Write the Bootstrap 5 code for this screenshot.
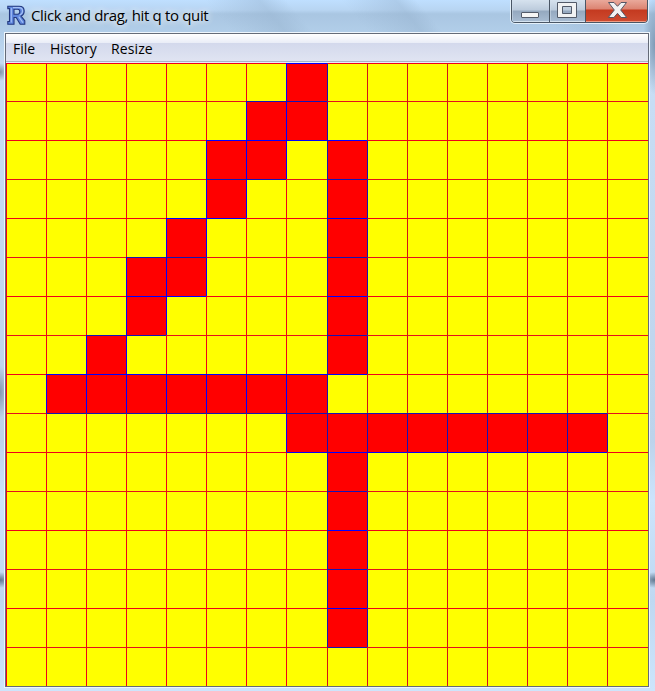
<!DOCTYPE html>
<html lang="en">
<head>
<meta charset="utf-8">
<meta name="viewport" content="width=device-width, initial-scale=1">
<title>Click and drag, hit q to quit</title>
<link href="https://cdn.jsdelivr.net/npm/bootstrap@5.3.0/dist/css/bootstrap.min.css" rel="stylesheet">
<style>
body{font-family:"Open Sans","Noto Sans",sans-serif;font-size:14px;color:#000;overflow:hidden}
.window-frame{width:655px;height:691px;padding:0 6px 4px 4px;
  background:
   radial-gradient(ellipse 9px 9px at 0 72px,#7f94aa 0,transparent 100%),
   radial-gradient(ellipse 9px 26px at 0 392px,#8499af 0,transparent 100%),
   radial-gradient(ellipse 14px 8px at 0 580px,#5f778e 0,transparent 100%),
   radial-gradient(ellipse 14px 8px at 655px 580px,#5f778e 0,transparent 100%),
   radial-gradient(ellipse 12px 50px at 655px 45px,#7f9ab5 0,transparent 100%),
   linear-gradient(50deg,transparent 0 34%,#91adc960 42%,transparent 46% 54%,#91adc960 62%,transparent 65% 82%,#91adc940 88%,transparent 92%) 0 0/655px 33px no-repeat,
   linear-gradient(180deg,#bfdfff 0,#b8d5f2 10px,#a9c6e2 14px,#b2cee9 33px,#c8def5 70px,#bdd3eb 440px,#cce4fc 500px,#bfd8f1 600px,#cde5fc 691px)}
.caption{height:32px}
.caption-text{font-size:15px;line-height:20px;margin-left:5px;margin-top:5px;padding-right:6px;letter-spacing:-.34px;white-space:nowrap;
  text-shadow:0 0 6px #ffffffb0,0 0 9px #ffffffb0,0 0 12px #ffffff90}
.app-icon{margin:5px 0 0 3px}
.controls{width:139px;height:24px;margin-right:0;border:1px solid #e4f0fa;border-top:0;border-radius:0 0 5px 5px;overflow:hidden}
.controls-inner{border:1px solid #4a5665;border-top:0;border-radius:0 0 4px 4px;overflow:hidden;height:23px}
.ctl{border:0;padding:0;background:linear-gradient(#d6e2ee 0,#bccbdc 10px,#94a8bf 11px,#a9bdd3 100%);box-shadow:inset 0 -1px #d5e3f0,inset 1px 0 #d0deeb88}
.ctl-min{width:37px}
.ctl-max{width:36px}
.ctl+.ctl{border-left:1px solid #4a5665}
.ctl-close{background:linear-gradient(#e9a99b 0,#dc8472 9px,#c43a20 10px,#cf4b30 100%);box-shadow:inset 0 -1px #ee9c84}
.client{width:646px;height:656px;border:1px solid #eef6fd}
.client-inner{border:1px solid #646b78;height:654px}
.menu{height:29px;padding:0 7px;gap:14px;background:linear-gradient(#fff 0,#e9edf7 9px,#d3d9ec 9px,#e0e4f2 27px,#a9b5c6 27px,#a9b5c6 28px,#e9eef7 28px)}
.menu .nav-link{padding:0;color:#000;line-height:29px;white-space:nowrap}
.m-file{width:23px}.m-history{width:47px}.m-resize{width:42px;letter-spacing:.12px}
.board{display:grid;width:642px;height:623px;grid-template-columns:repeat(7,40px) 41px repeat(7,40px) 41px;grid-template-rows:38px repeat(15,39px);background:#ff0;cursor:crosshair}
.cell{--h:#f00018;--v:#f00018;background:#ff0;border-left:1px solid var(--v);border-top:1px solid var(--h)}
.cell.dim-v{--v:#d01418}
.cell.dim-h{--h:#e4101c}
.cell.on{background:red}
.cell.edge-v{--v:#0000ff}
.cell.edge-h{--h:#0000ff}
.cell.edge-v.dim-v{--v:#1414b4}
.cell.edge-h.dim-h{--h:#1414b4}
</style>
<script src="https://cdn.jsdelivr.net/npm/bootstrap@5.3.0/dist/js/bootstrap.bundle.min.js"></script>
</head>
<body>
<main class="window-frame">
  <header class="caption d-flex align-items-start">
    <svg class="app-icon" width="19" height="20" viewBox="0 0 19 20" aria-hidden="true">
      <path d="M.8 1.2H12q5.200 0 5.200 4.800 0 3.900-3.200 5l3.800 4.800v3.400h-4.600l-4-6.700H7v6.700H.8v-2.700h1.700V3.600H.8zM7 4.200v5h3.600q2.200 0 2.200-2.500T10.600 4.200z" fill="#5f86dc" fill-rule="evenodd" stroke="#22387f" stroke-width="1.1"/>
      <path d="M4.300 3v14.500M6 2.600h6q3.600.1 3.600 3.500 0 3-3 4.100M11.700 11.600l4.200 6" fill="none" stroke="#a4c0f6" stroke-width="1.1"/>
    </svg>
    <div class="caption-text">Click and drag, hit q to quit</div>
    <div class="controls ms-auto">
      <div class="controls-inner d-flex">
        <button class="ctl ctl-min d-flex" aria-label="Minimize"><svg width="37" height="22"><rect x="9.500" y="12.500" width="17" height="5" rx=".5" fill="#f5f5f5" stroke="#525a69"/></svg></button>
        <button class="ctl ctl-max d-flex" aria-label="Maximize"><svg width="35" height="22"><path d="M7.500 2.500h19v15h-19zM12.500 6.500v7h9v-7z" fill="#f1f2f3" fill-rule="evenodd" stroke="#525a69"/></svg></button>
        <button class="ctl ctl-close d-flex flex-grow-1" aria-label="Close"><svg width="62" height="22"><path d="M22.500 2.500h5.500l3.500 3.800L35 2.500h5.500L34.700 10l6 7.500h-5.600l-3.600-4.200-3.600 4.200h-5.600l6-7.500z" fill="#f2f2f2" stroke="#555765"/></svg></button>
      </div>
    </div>
  </header>
  <section class="client">
    <div class="client-inner">
      <nav class="menu d-flex">
        <a class="nav-link m-file" href="#">File</a>
        <a class="nav-link m-history" href="#">History</a>
        <a class="nav-link m-resize" href="#">Resize</a>
      </nav>
      <div class="board" id="board"></div>
    </div>
  </section>
</main>
<script>
const rows = [
  '.......#........',
  '......##........',
  '.....##.#.......',
  '.....#..#.......',
  '....#...#.......',
  '...##...#.......',
  '...#....#.......',
  '..#.....#.......',
  '.#######........',
  '.......########.',
  '........#.......',
  '........#.......',
  '........#.......',
  '........#.......',
  '........#.......',
  '................'
];
const on = (r, c) => (rows[r] || '')[c] === '#';
const board = document.getElementById('board');
rows.forEach((row, r) => [...row].forEach((_, c) => {
  const cell = document.createElement('div');
  cell.className = 'cell';
  cell.classList.toggle('on', on(r, c));
  cell.classList.toggle('edge-v', on(r, c) || on(r, c - 1));
  cell.classList.toggle('edge-h', on(r, c) || on(r - 1, c));
  cell.classList.toggle('dim-v', c > 7);
  cell.classList.toggle('dim-h', r % 2 === 1);
  board.append(cell);
}));
</script>
</body>
</html>
